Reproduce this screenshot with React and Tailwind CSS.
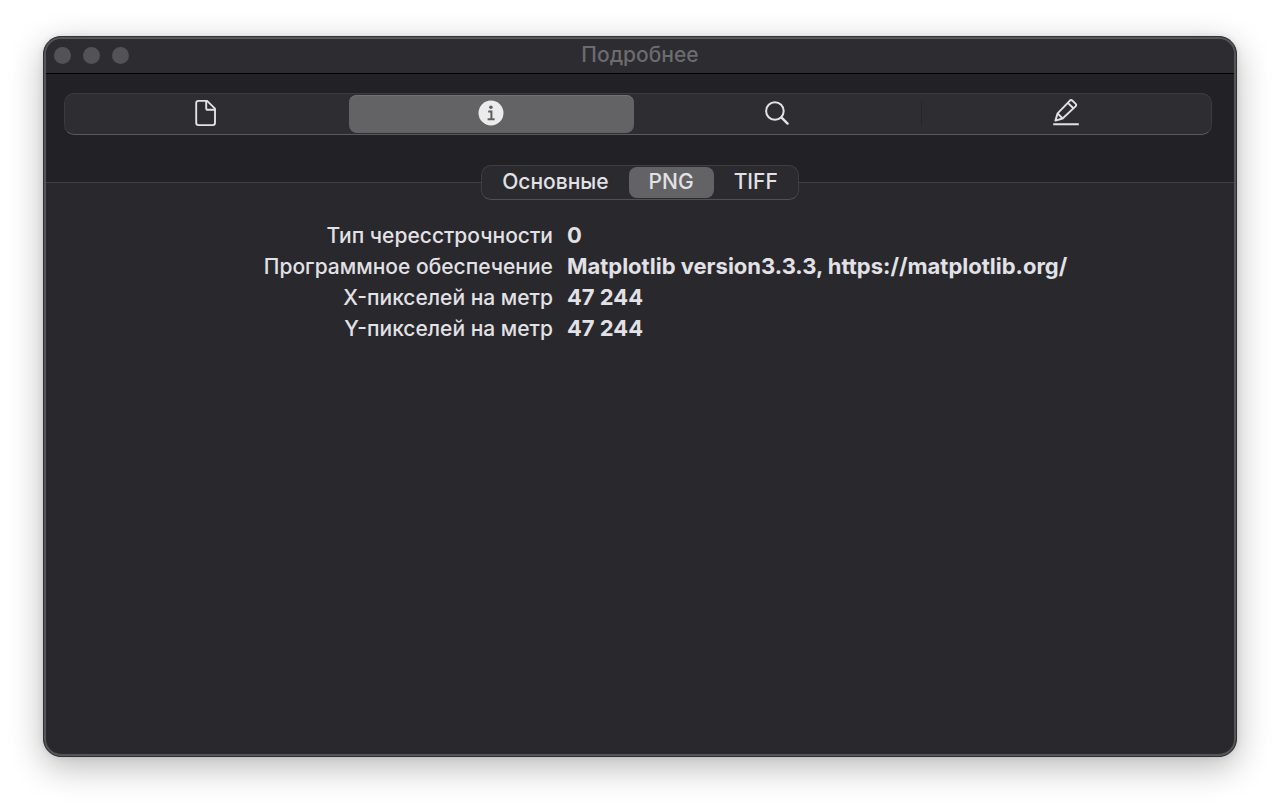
import { useState } from "react";
import clsx from "clsx";

const fields = [
    { label: "Тип чересстрочности", value: "0" },
    { label: "Программное обеспечение", value: "Matplotlib version3.3.3, https://matplotlib.org/" },
    { label: "X-пикселей на метр", value: "47 244" },
    { label: "Y-пикселей на метр", value: "47 244" },
];

const tabs = ["Основные", "PNG", "TIFF"];

function FileIcon() {
    return (
        <svg width="22" height="28" viewBox="0 0 22 28" fill="none" stroke="currentColor" strokeWidth="1.9" strokeLinejoin="round">
            <path d="M3.5 1.9h8.6L20 9.6v14.2a2.3 2.3 0 0 1-2.3 2.3H3.5a2.3 2.3 0 0 1-2.3-2.3V4.2a2.3 2.3 0 0 1 2.3-2.3Z" />
            <path d="M11.2 2v7.2a1.6 1.6 0 0 0 1.6 1.6h7" />
        </svg>
    );
}

function InfoIcon() {
    return (
        <svg width="26" height="26" viewBox="0 0 26 26" fill="none">
            <circle cx="13" cy="13" r="12.5" fill="#ebebec" />
            <circle cx="12.9" cy="7.2" r="1.8" fill="#5f5f61" />
            <path d="M10.2 11.4h3.2v7.7M9.6 19.2h7" stroke="#5f5f61" strokeWidth="2" />
        </svg>
    );
}

function SearchIcon() {
    return (
        <svg width="26" height="26" viewBox="0 0 26 26" fill="none" stroke="currentColor" strokeLinecap="round">
            <circle cx="10.9" cy="11" r="8.8" strokeWidth="2" />
            <path d="m17.6 17.6 6 6" strokeWidth="2.4" />
        </svg>
    );
}

function PencilIcon() {
    return (
        <svg width="28" height="28" viewBox="0 0 28 28" fill="none" stroke="currentColor" strokeWidth="1.9" strokeLinejoin="round">
            <path d="M3.4 21.6 5.6 14.4 17.7 1.8a2 2 0 0 1 2.8 0l3 2.8a2 2 0 0 1 0 2.8L10.6 19.5 3.4 21.6Z" />
            <path d="m15.8 3.9 5.6 5.4M5.6 14.4l5 5.1" />
            <path d="M1.2 25.2h25.6" strokeWidth="2" />
        </svg>
    );
}

const panels = [
    { name: "Файл", Icon: FileIcon },
    { name: "Информация", Icon: InfoIcon },
    { name: "Поиск", Icon: SearchIcon },
    { name: "Аннотации", Icon: PencilIcon },
];

function App() {
    const [panel, setPanel] = useState(1);
    const [tab, setTab] = useState("PNG");

    return (
        <div className="flex min-h-screen flex-col bg-white px-[43px] pt-9 pb-[51px] font-['Inter','Liberation_Sans',sans-serif] text-[21px] font-medium text-[#e2e1e5]">
            <main className="flex flex-1 flex-col overflow-hidden rounded-[18px] border border-[#303032] bg-[#29282d] shadow-[0_10px_34px_rgba(0,0,0,0.28),0_0_6px_rgba(0,0,0,0.1)]">
                <div className="flex flex-1 flex-col rounded-[17px] border-2 border-[#555658]">

                    {/* Title bar */}
                    <header className="grid h-[35px] grid-cols-[1fr_auto_1fr] items-center rounded-t-2xl border-b border-black bg-[#2d2c30] px-2 pb-0.5">
                        <div className="flex gap-3">
                            <button aria-label="Закрыть" className="size-[17px] rounded-full bg-[#535257]" />
                            <button aria-label="Свернуть" className="size-[17px] rounded-full bg-[#535257]" />
                            <button aria-label="Развернуть" className="size-[17px] rounded-full bg-[#535257]" />
                        </div>
                        <h1 className="text-[#6c6b70]">Подробнее</h1>
                    </header>

                    {/* Panel switcher */}
                    <div className="bg-[#222126] pt-[19px] pr-[22px] pb-[47px] pl-[18px]">
                        <nav className="grid h-[42px] grid-cols-[284fr_285fr_288fr_289fr] rounded-[10px] border border-[#3b3a3f] border-b-[#5a595d] bg-[#2e2d32]">
                            {panels.map(({ name, Icon }, i) => (
                                <button
                                    key={name}
                                    aria-label={name}
                                    aria-pressed={panel === i}
                                    onClick={() => setPanel(i)}
                                    className="flex items-center py-px"
                                >
                                    <span
                                        className={clsx(
                                            "flex h-full flex-1 items-center justify-center rounded-lg pr-0.5 pb-0.5",
                                            panel === i && "bg-[#636365] shadow-[inset_0_1px_0_#717173]"
                                        )}
                                    >
                                        <Icon />
                                    </span>
                                    {i === 2 && <span className="h-6 w-px bg-[#27262b]" />}
                                </button>
                            ))}
                        </nav>
                    </div>

                    {/* Details */}
                    <section className="flex-1 border-t border-[#424146]">
                        <div className="-mt-[18px] flex justify-center">
                            <div className="flex h-[35px] rounded-[10px] border border-[#3f3e43] border-b-[#515055] bg-[#2b2a2f] py-px">
                                {tabs.map((name) => (
                                    <button
                                        key={name}
                                        aria-pressed={tab === name}
                                        onClick={() => setTab(name)}
                                        className={clsx(
                                            "flex items-center rounded-lg px-5 pb-0.5",
                                            tab === name && "bg-[#636365]"
                                        )}
                                    >
                                        {name}
                                    </button>
                                ))}
                            </div>
                        </div>

                        <dl className="mt-5 leading-[31px]">
                            {fields.map(({ label, value }) => (
                                <div key={label} className="grid grid-cols-[19fr_25fr] gap-x-[14px]">
                                    <dt className="text-right">{label}</dt>
                                    <dd className="text-[22px] font-bold">{value}</dd>
                                </div>
                            ))}
                        </dl>
                    </section>
                </div>
            </main>
        </div>
    );
}

export default App;
